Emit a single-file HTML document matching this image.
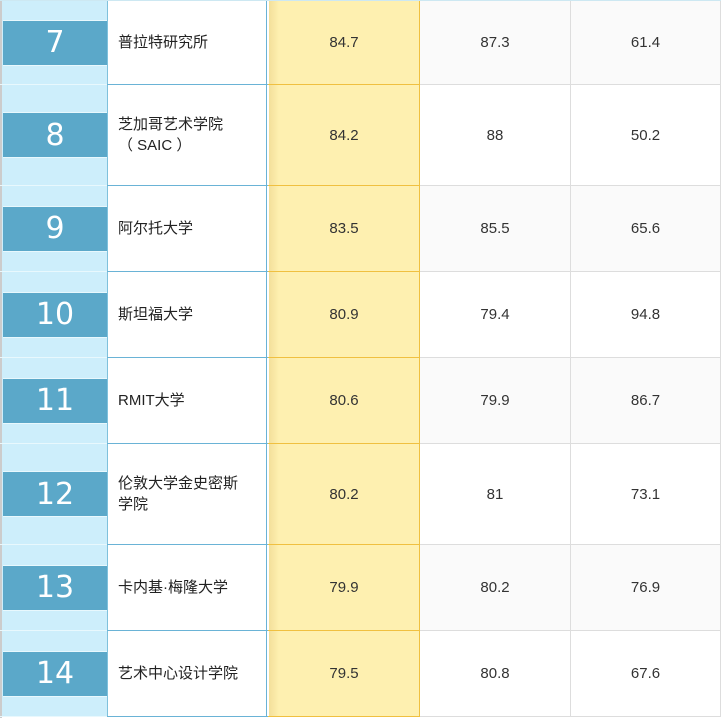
<!DOCTYPE html><html><head><meta charset="utf-8"><style>
body{margin:0;width:723px;height:718px;background:#fff;position:relative;overflow:hidden;font-family:"Liberation Sans","Noto Sans CJK SC",sans-serif;}
.r{position:absolute;left:0;width:721px}
.c{position:absolute;top:0;bottom:0;display:flex;align-items:center}
.c1{left:2px;width:105px;background:#cdeefb;border-right:1px solid #7fc1dc}
.box{position:absolute;left:1px;right:0;height:44px;background:#5ba8c9;border-top:1px solid #e8f8fd;border-bottom:1px solid #e8f8fd;color:#fff;font-size:30px;display:flex;align-items:center;justify-content:center;font-family:"DejaVu Sans","Liberation Sans",sans-serif;font-weight:normal}
.c2{left:108px;width:159px;background:#fff;border-right:1px solid #6ab3d6;padding-left:10px;box-sizing:border-box;font-size:15px;color:#222;line-height:21px}
.c3{left:269px;width:150px;background:linear-gradient(90deg,#f3df9a 0,#fef0b0 10px,#fef0b0);border-right:1px solid #f0c040;justify-content:center;font-size:15px;color:#333}
.c4{left:420px;width:150px;border-right:1px solid #ddd;justify-content:center;font-size:15px;color:#333}
.c5{left:571px;width:149px;border-right:1px solid #ddd;justify-content:center;font-size:15px;color:#333}
.odd .c4,.odd .c5{background:#fafafa}
.h{position:absolute;left:0;width:721px;height:1px;background:linear-gradient(90deg,#e8f8fd 0 107px,#6ab3d6 107px 268px,#f0c040 268px 420px,#ddd 420px)}
</style></head><body>
<div style="position:absolute;left:0;top:0;width:2px;height:718px;background:#ccc"></div>

<div class="r odd" style="top:1px;height:83px"><div class="c c1"><div class="box">7</div></div><div class="c c2">普拉特研究所</div><div class="c c3">84.7</div><div class="c c4">87.3</div><div class="c c5">61.4</div></div>
<div class="r" style="top:85px;height:100px"><div class="c c1"><div class="box">8</div></div><div class="c c2">芝加哥艺术学院<br>（ SAIC ）</div><div class="c c3">84.2</div><div class="c c4">88</div><div class="c c5">50.2</div></div>
<div class="r odd" style="top:186px;height:85px"><div class="c c1"><div class="box">9</div></div><div class="c c2">阿尔托大学</div><div class="c c3">83.5</div><div class="c c4">85.5</div><div class="c c5">65.6</div></div>
<div class="r" style="top:272px;height:85px"><div class="c c1"><div class="box">10</div></div><div class="c c2">斯坦福大学</div><div class="c c3">80.9</div><div class="c c4">79.4</div><div class="c c5">94.8</div></div>
<div class="r odd" style="top:358px;height:85px"><div class="c c1"><div class="box">11</div></div><div class="c c2">RMIT大学</div><div class="c c3">80.6</div><div class="c c4">79.9</div><div class="c c5">86.7</div></div>
<div class="r" style="top:444px;height:100px"><div class="c c1"><div class="box">12</div></div><div class="c c2">伦敦大学金史密斯<br>学院</div><div class="c c3">80.2</div><div class="c c4">81</div><div class="c c5">73.1</div></div>
<div class="r odd" style="top:545px;height:85px"><div class="c c1"><div class="box">13</div></div><div class="c c2">卡内基·梅隆大学</div><div class="c c3">79.9</div><div class="c c4">80.2</div><div class="c c5">76.9</div></div>
<div class="r" style="top:631px;height:85px"><div class="c c1"><div class="box">14</div></div><div class="c c2">艺术中心设计学院</div><div class="c c3">79.5</div><div class="c c4">80.8</div><div class="c c5">67.6</div></div>

<div class="h" style="top:0;background:#cde8f2"></div>
<div class="h" style="top:84px"></div>
<div class="h" style="top:185px"></div>
<div class="h" style="top:271px"></div>
<div class="h" style="top:357px"></div>
<div class="h" style="top:443px"></div>
<div class="h" style="top:544px"></div>
<div class="h" style="top:630px"></div>
<div class="h" style="top:716px"></div>
</body></html>
